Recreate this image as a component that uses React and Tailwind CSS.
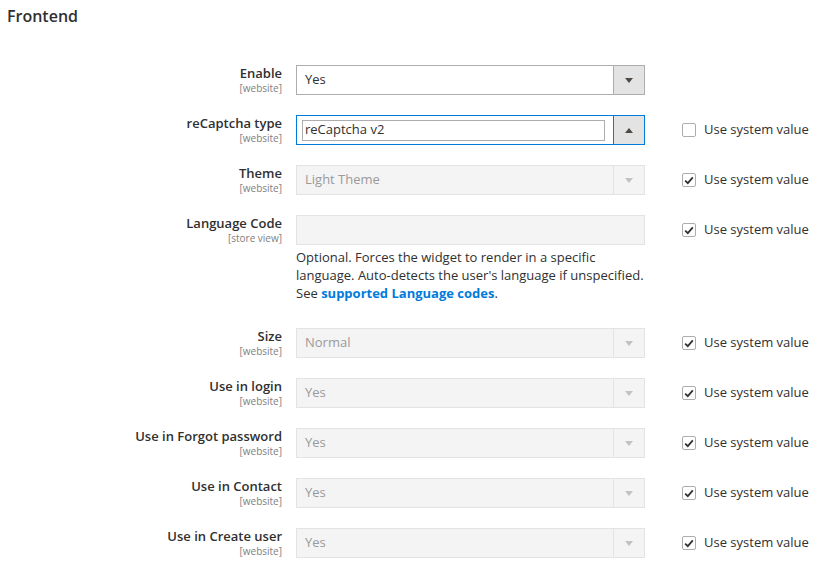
import React from 'react';

const Arrow = ({ up, color }) => (
  <svg width="8" height="5" viewBox="0 0 8 5" className="block">
    {up ? <path d="M0 5 L4 0 L8 5 Z" fill={color} /> : <path d="M0 0 L8 0 L4 5 Z" fill={color} />}
  </svg>
);

const CheckBox = ({ checked }) => (
  <div className="flex items-center gap-2">
    <div className="w-[14px] h-[14px] border border-[#adadad] rounded-[2px] bg-white flex items-center justify-center">
      {checked && (
        <svg width="10" height="9" viewBox="0 0 10 9">
          <path d="M1.2 4.6 L3.8 7.2 L8.8 1.4" stroke="#303030" strokeWidth="1.8" fill="none" />
        </svg>
      )}
    </div>
    <span className="text-[13px] text-[#303030]">Use system value</span>
  </div>
);

const Select = ({ value, disabled }) => (
  <div
    className={
      disabled
        ? 'w-[349px] h-[30px] flex border border-[#e3e3e3] bg-[#f4f4f4]'
        : 'w-[349px] h-[30px] flex border border-[#adadad] bg-white'
    }
  >
    <div className={disabled ? 'flex-1 flex items-center pl-[8px] text-[13px] text-[#9a9a9a]' : 'flex-1 flex items-center pl-[8px] text-[13px] text-[#303030]'}>
      {value}
    </div>
    <div
      className={
        disabled
          ? 'w-[31px] flex items-center justify-center border-l border-[#e3e3e3]'
          : 'w-[31px] flex items-center justify-center border-l border-[#adadad] bg-[#e3e3e3]'
      }
    >
      <Arrow color={disabled ? '#c2c2c2' : '#514943'} />
    </div>
  </div>
);

const Label = ({ title, scope }) => (
  <div className="w-[282px] text-right -mt-px">
    <div className="text-[13px] leading-[18px] font-semibold text-[#303030]">{title}</div>
    <div className="text-[10px] leading-[13px] text-[#808080]">{scope}</div>
  </div>
);

const Row = ({ title, scope, children, system }) => (
  <div className="flex items-start">
    <Label title={title} scope={scope} />
    <div className="ml-[14px]">{children}</div>
    {system !== undefined && (
      <div className="ml-[37px] h-[30px] flex items-center">
        <CheckBox checked={system} />
      </div>
    )}
  </div>
);

export default function App() {
  return (
    <div className="w-[819px] h-[569px] bg-white overflow-hidden" style={{ fontFamily: '"Open Sans", Arial, sans-serif' }}>
      <div className="pl-[7px] pt-[5px] text-[16px] leading-[22px] font-semibold text-[#303030]">Frontend</div>
      <div className="mt-[38px] flex flex-col gap-[20px]">
        <Row title="Enable" scope="[website]">
          <Select value="Yes" />
        </Row>
        <Row title="reCaptcha type" scope="[website]" system={false}>
          <div className="w-[349px] h-[30px] flex border border-[#007bdb] bg-white">
            <div className="flex-1 flex items-center pl-[5px] pr-[8px]">
              <div className="w-full h-[21px] border border-[#adadad] flex items-center pl-[2px] text-[13px] text-[#303030]">reCaptcha v2</div>
            </div>
            <div className="w-[31px] flex items-center justify-center border-l border-[#007bdb] bg-[#e3e3e3]">
              <Arrow up color="#514943" />
            </div>
          </div>
        </Row>
        <Row title="Theme" scope="[website]" system={true}>
          <Select value="Light Theme" disabled />
        </Row>
        <Row title="Language Code" scope="[store view]" system={true}>
          <div className="w-[349px] h-[30px] border border-[#e3e3e3] bg-[#f4f4f4]" />
          <div className="w-[349px] mt-[3px] mb-[6px] text-[13px] leading-[18px] text-[#303030]">
            Optional. Forces the widget to render in a specific language. Auto-detects the user's language if unspecified. See{' '}
            <span className="font-bold text-[#007bdb]">supported Language codes</span>.
          </div>
        </Row>
        <Row title="Size" scope="[website]" system={true}>
          <Select value="Normal" disabled />
        </Row>
        <Row title="Use in login" scope="[website]" system={true}>
          <Select value="Yes" disabled />
        </Row>
        <Row title="Use in Forgot password" scope="[website]" system={true}>
          <Select value="Yes" disabled />
        </Row>
        <Row title="Use in Contact" scope="[website]" system={true}>
          <Select value="Yes" disabled />
        </Row>
        <Row title="Use in Create user" scope="[website]" system={true}>
          <Select value="Yes" disabled />
        </Row>
      </div>
    </div>
  );
}
